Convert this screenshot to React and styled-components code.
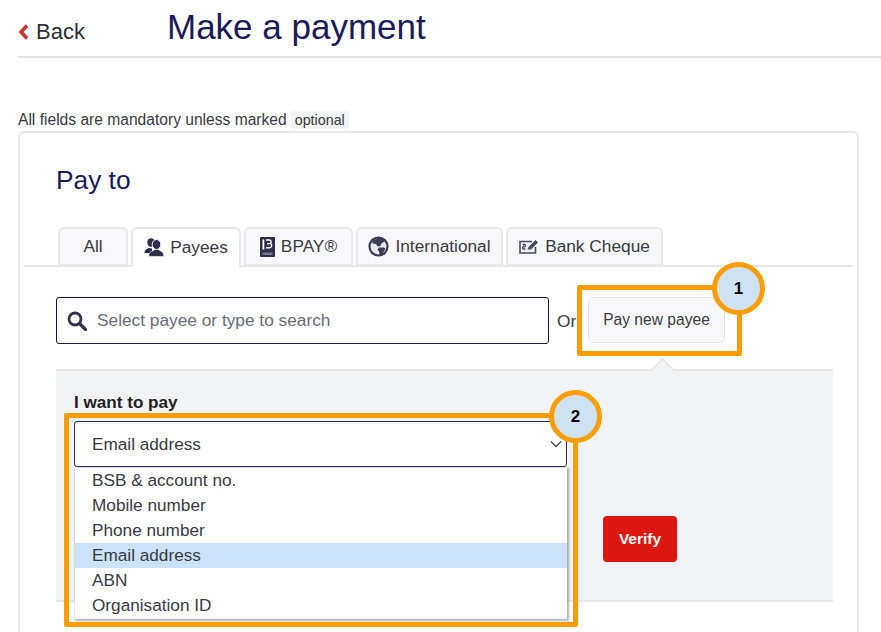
import React from 'react';
import styled, { createGlobalStyle } from 'styled-components';

const GlobalStyle = createGlobalStyle`
  html, body {
    margin: 0;
    padding: 0;
    background: #fff;
    overflow: hidden;
  }
  * {
    box-sizing: border-box;
  }
`;

const Page = styled.div`
  position: relative;
  width: 881px;
  height: 632px;
  overflow: hidden;
  padding-left: 18px;
  font-family: 'Liberation Sans', Arial, sans-serif;
  color: #3a3a44;
`;

const Header = styled.header`
  display: flex;
  align-items: flex-end;
  height: 58px;
  border-bottom: 2px solid #e3e3e5;
`;

const BackLink = styled.a`
  display: flex;
  align-items: center;
  gap: 7px;
  width: 149px;
  height: 22px;
  margin-bottom: 13px;
  font-size: 22px;
  color: #2f2f38;
`;

const Title = styled.h1`
  margin: 0 0 9px;
  font-size: 35px;
  line-height: 40px;
  font-weight: 400;
  color: #1b1b5c;
`;

const Notice = styled.p`
  display: flex;
  align-items: center;
  gap: 4px;
  height: 20px;
  margin: 52px 0 1px;
  font-size: 15.6px;
`;

const OptionalTag = styled.span`
  padding: 1px 4px;
  border-radius: 3px;
  background: #f2f3f5;
  font-size: 14.3px;
`;

const Card = styled.section`
  width: 841px;
  height: 530px;
  padding: 0 4px;
  border: 2px solid #e8e8ea;
  border-bottom: none;
  border-radius: 6px 6px 0 0;
`;

const CardTitle = styled.h2`
  margin: 0;
  padding: 31px 0 0 32px;
  height: 94px;
  font-size: 26.3px;
  line-height: 32px;
  font-weight: 400;
  color: #1b1b5c;
`;

const TabBar = styled.nav`
  display: flex;
  gap: 3px;
  height: 40px;
  padding-left: 34px;
  border-bottom: 2px solid #e8e8ea;
`;

const Tab = styled.div`
  display: flex;
  align-items: center;
  justify-content: center;
  gap: 6px;
  width: ${p => p.$width}px;
  height: ${p => (p.$active ? 40 : 39)}px;
  padding-bottom: ${p => (p.$active ? 2 : 0)}px;
  border: 2px solid #e8e8ea;
  border-bottom: ${p => (p.$active ? 'none' : '2px solid #e8e8ea')};
  border-radius: 6px 6px 0 0;
  background: ${p => (p.$active ? '#fff' : '#f8f8fa')};
  font-size: 17.3px;
  color: #3a3a44;
`;

const SearchRow = styled.div`
  display: flex;
  align-items: flex-start;
  height: 102px;
  padding: 30px 0 0 32px;
`;

const SearchBox = styled.div`
  display: flex;
  align-items: center;
  gap: 10px;
  width: 493px;
  height: 47px;
  padding-left: 10px;
  border: 1px solid #17174f;
  border-radius: 3px;
  font-size: 17.3px;
  color: #6c6c78;
`;

const OrLabel = styled.span`
  margin: 14px 0 0 8px;
  width: 31px;
  font-size: 17.3px;
`;

const PayNewButton = styled.button`
  width: 137px;
  height: 46px;
  padding: 0;
  border: 1px solid #e4e4e6;
  border-radius: 5px;
  background: #f8f8fa;
  font-family: inherit;
  font-size: 15.6px;
  color: #3a3a44;
`;

const Panel = styled.div`
  position: relative;
  display: flex;
  flex-direction: column;
  width: 777px;
  height: 233px;
  margin-left: 32px;
  padding: 23px 18px 0;
  border-top: 2px solid #e6e6e8;
  border-bottom: 2px solid #e6e6e8;
  background: #f2f3f5;
`;

const PanelArrow = styled.span`
  position: absolute;
  top: -10px;
  left: 597px;
  width: 19px;
  height: 19px;
  transform: rotate(45deg) scale(0.95);
  background: #f2f3f5;
  border-top: 2px solid #e6e6e4;
  border-left: 2px solid #e6e6e4;
`;

const FieldLabel = styled.label`
  height: 27px;
  font-size: 17.1px;
  line-height: 18px;
  font-weight: 700;
  color: #1f1f24;
`;

const SelectBox = styled.div`
  position: relative;
  display: flex;
  align-items: center;
  justify-content: space-between;
  width: 493px;
  height: 46px;
  padding: 0 4px 0 17px;
  border: 1px solid #2b2b5e;
  border-radius: 3px;
  background: #fff;
  font-size: 17.2px;
  color: #3a3a44;
`;

const OptionList = styled.ul`
  position: absolute;
  top: 46px;
  left: 0;
  width: 492px;
  height: 151px;
  margin: 0;
  padding: 0;
  list-style: none;
  background: #fff;
  box-shadow: 1px 1px 2px 1px rgba(0, 0, 0, 0.3);
`;

const Option = styled.li`
  height: 25px;
  padding-left: 17px;
  font-size: 17.2px;
  line-height: 25px;
  background: ${p => (p.$selected ? '#cce2f8' : 'transparent')};
`;

const VerifyButton = styled.button`
  position: absolute;
  top: 145px;
  left: 547px;
  width: 74px;
  height: 46px;
  padding: 0;
  border: none;
  border-radius: 4px;
  background: #dc1711;
  color: #fff;
  font-family: inherit;
  font-size: 15.5px;
  font-weight: 700;
`;

const Callout = styled.div`
  position: absolute;
  left: ${p => p.$x}px;
  top: ${p => p.$y}px;
  width: ${p => p.$w}px;
  height: ${p => p.$h}px;
  border: 5px solid #ff9d00;
  border-radius: 2px;
`;

const CalloutBadge = styled.span`
  position: absolute;
  left: ${p => p.$x}px;
  top: ${p => p.$y}px;
  display: flex;
  align-items: center;
  justify-content: center;
  width: 53px;
  height: 53px;
  border: 5px solid #ff9d00;
  border-radius: 50%;
  background: #cfe2f3;
  font-size: 17px;
  font-weight: 700;
  color: #000;
`;

const ChevronLeft = () => (
  <svg width="11" height="16" viewBox="0 0 11 16">
    <path d="M9 1.5 3 8l6 6.5" fill="none" stroke="#c8372d" strokeWidth="3.6" />
  </svg>
);

const PayeesIcon = () => (
  <svg width="20" height="19" viewBox="0 0 20 19" fill="#2f2f4a">
    <ellipse cx="7" cy="4.5" rx="3.6" ry="4.2" />
    <path d="M.5 15c0-3 1.500-4.300 4.500-5l3 .5v4.500Z" />
    <ellipse cx="12.5" cy="6.5" rx="4.3" ry="5" stroke="#fff" strokeWidth="1" />
    <path d="M19.8 18.500H4.800c0-3.500 1.400-5 4.700-5.900l1-1.100h4l1 1.100c3 .9 4.300 2.400 4.300 5.900Z" stroke="#fff" strokeWidth=".6" />
  </svg>
);

const BpayIcon = () => (
  <svg width="15" height="20" viewBox="0 0 15 20">
    <rect width="15" height="20" rx="1" fill="#2f2f4a" />
    <rect x="2.5" y="2.5" width="1.8" height="10" fill="#fff" />
    <path d="M6 3h3.500a1.800 1.800 0 0 1 .8 3.300 2.300 2.300 0 0 1-.8 4.400H6M7 6.700h2.500" fill="none" stroke="#fff" strokeWidth="1.4" />
    <rect x="2.5" y="15.5" width="10" height="2.5" fill="#77778a" />
  </svg>
);

const GlobeIcon = () => (
  <svg width="21" height="21" viewBox="0 0 21 21">
    <circle cx="10.5" cy="10.5" r="9" fill="#e8e8ee" stroke="#3d3d55" strokeWidth="2.2" />
    <path d="M4.500 4.500 10 1.800l5 .7 2 2.500-3.500 2.500-1 2.500-3 .5-1.500-2.500-3.500-.5Z" fill="#3d3d55" />
    <path d="M11 11.500h5l1.500 1.500-3.500 5-2.500 1-.5-3.500-1.500-2Z" fill="#3d3d55" />
  </svg>
);

const ChequeIcon = () => (
  <svg width="20" height="15" viewBox="0 0 20 15">
    <path d="M13 2.500H1v11.500h15.500V8" fill="#f0f0f3" stroke="#4a4a60" strokeWidth="1.6" />
    <path d="M3.500 5.500h3v2.200h-3v2.300h3M5 4.500v6.500" fill="none" stroke="#4a4a60" strokeWidth="1" />
    <path d="M8.500 10.500 9.500 8 16.500 1l2.500 2.500L12 10.500Z" fill="#4a4a60" />
  </svg>
);

const SearchIcon = () => (
  <svg width="20" height="20" viewBox="0 0 20 20">
    <circle cx="8" cy="8" r="6" fill="none" stroke="#33334d" strokeWidth="2.8" />
    <path d="m12.500 12.500 6 6" stroke="#33334d" strokeWidth="3.2" strokeLinecap="round" />
  </svg>
);

const ChevronDown = () => (
  <svg width="12" height="8" viewBox="0 0 12 8">
    <path d="M1 1.500 6 6.500l5-5" fill="none" stroke="#44444c" strokeWidth="1.3" />
  </svg>
);

const tabs = [
  { label: 'All', width: 70 },
  { label: 'Payees', width: 110, icon: <PayeesIcon />, active: true },
  { label: 'BPAY®', width: 109, icon: <BpayIcon /> },
  { label: 'International', width: 147, icon: <GlobeIcon /> },
  { label: 'Bank Cheque', width: 157, icon: <ChequeIcon /> },
];

const options = ['BSB & account no.', 'Mobile number', 'Phone number', 'Email address', 'ABN', 'Organisation ID'];

export default function App() {
  return (
    <Page>
      <GlobalStyle />
      <Header>
        <BackLink>
          <ChevronLeft />
          Back
        </BackLink>
        <Title>Make a payment</Title>
      </Header>
      <Notice>
        All fields are mandatory unless marked <OptionalTag>optional</OptionalTag>
      </Notice>
      <Card>
        <CardTitle>Pay to</CardTitle>
        <TabBar>
          {tabs.map(tab => (
            <Tab key={tab.label} $width={tab.width} $active={tab.active}>
              {tab.icon}
              {tab.label}
            </Tab>
          ))}
        </TabBar>
        <SearchRow>
          <SearchBox>
            <SearchIcon />
            Select payee or type to search
          </SearchBox>
          <OrLabel>Or</OrLabel>
          <PayNewButton>Pay new payee</PayNewButton>
        </SearchRow>
        <Panel>
          <PanelArrow />
          <FieldLabel>I want to pay</FieldLabel>
          <SelectBox>
            Email address
            <ChevronDown />
            <OptionList>
              {options.map(option => (
                <Option key={option} $selected={option === 'Email address'}>
                  {option}
                </Option>
              ))}
            </OptionList>
          </SelectBox>
          <VerifyButton>Verify</VerifyButton>
        </Panel>
      </Card>
      <Callout $x={577} $y={285} $w={165} $h={71} />
      <CalloutBadge $x={712} $y={262}>1</CalloutBadge>
      <Callout $x={64} $y={413} $w={514} $h={214} />
      <CalloutBadge $x={549} $y={390}>2</CalloutBadge>
    </Page>
  );
}
